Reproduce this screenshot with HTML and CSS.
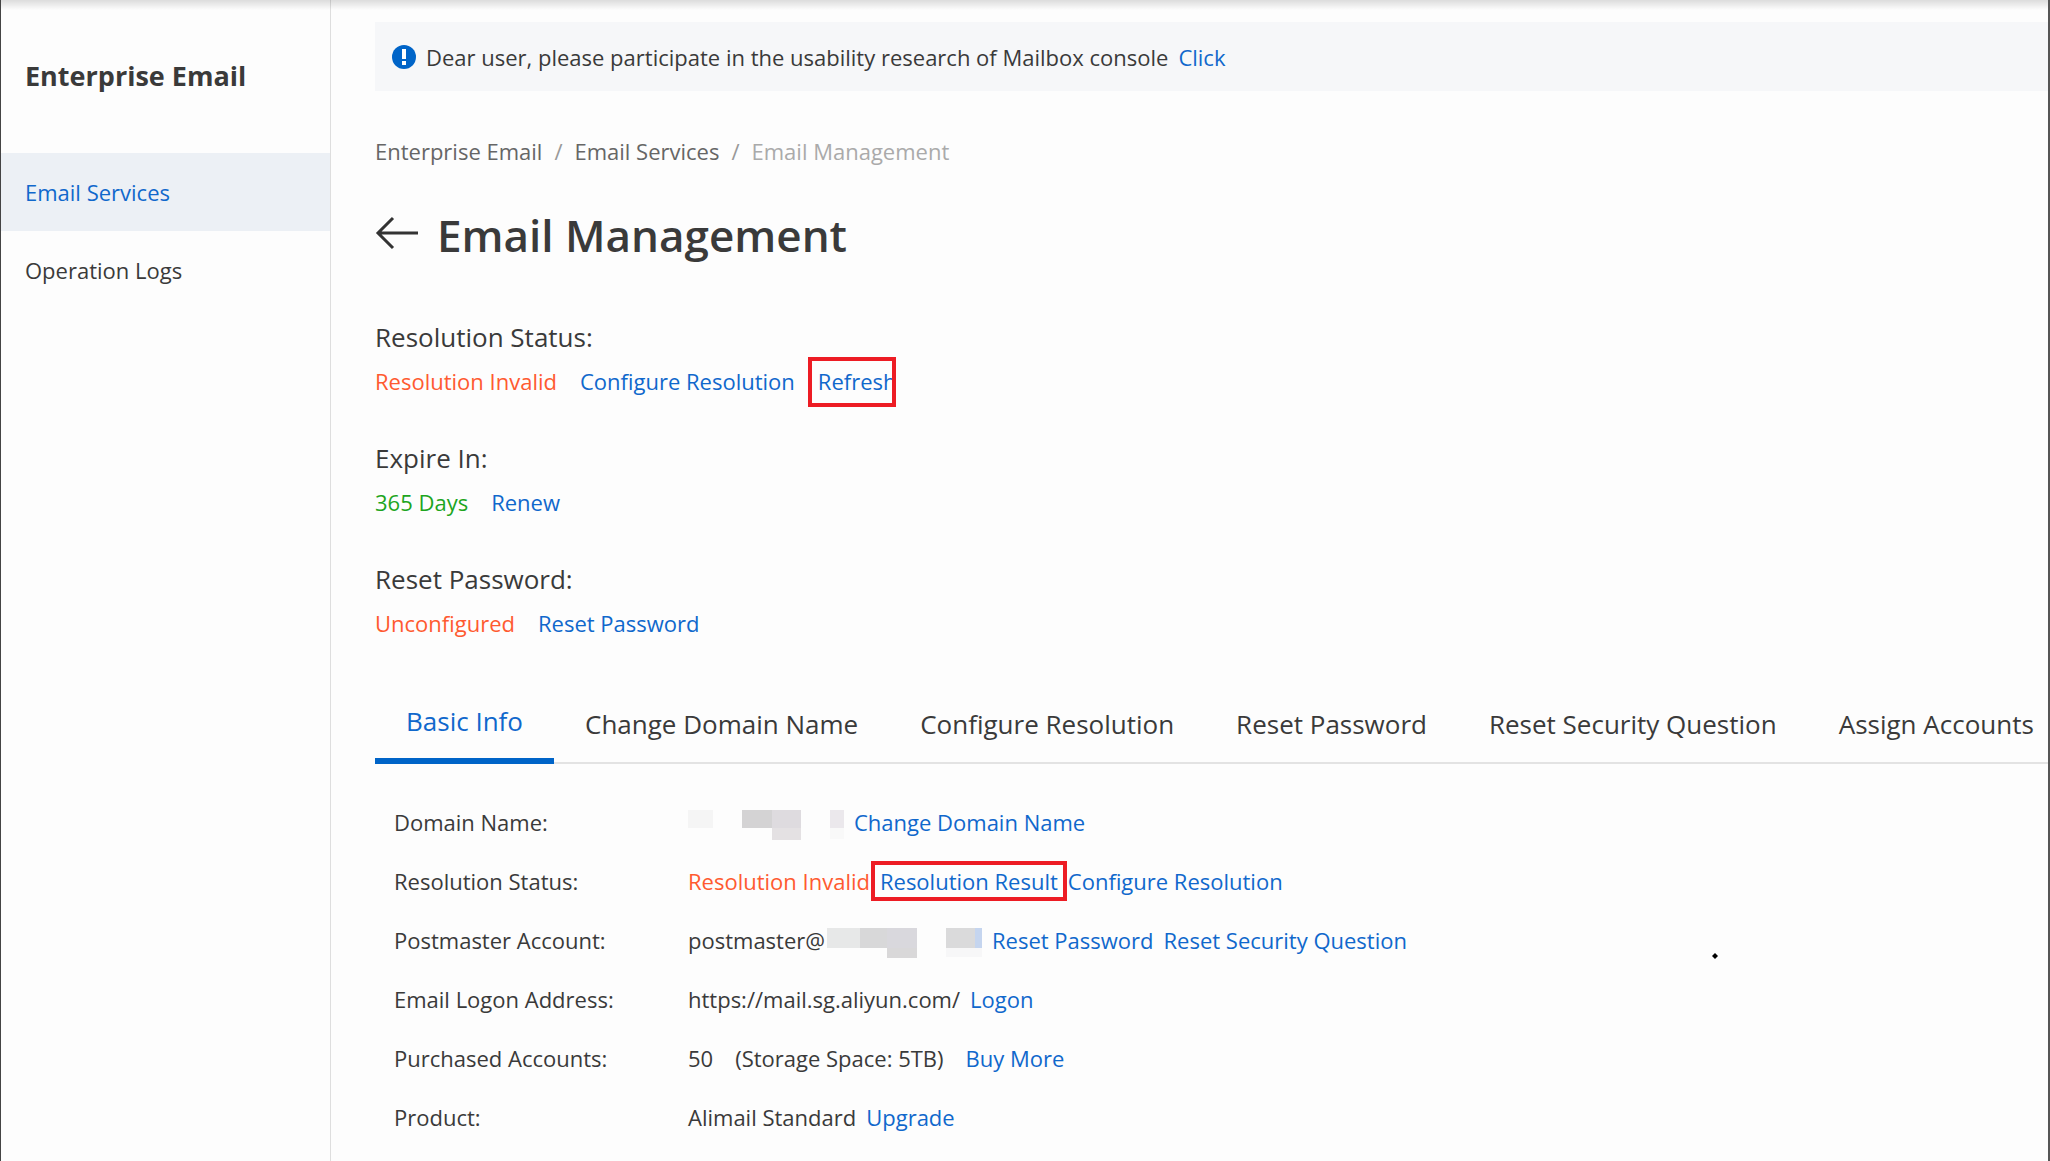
FILE: index.html
```html
<!DOCTYPE html>
<html lang="en">
<head>
<meta charset="utf-8">
<title>Email Management</title>
<link rel="stylesheet" href="styles.css">
</head>
<body>
<div class="page">
    <aside class="sidebar">
        <h2>Enterprise Email</h2>
        <nav>
            <a href="#" class="active">Email Services</a>
            <a href="#">Operation Logs</a>
        </nav>
    </aside>

    <main class="content">
        <div class="notice">
            <svg class="noticeIcon" viewBox="0 0 24 24">
                <circle cx="12" cy="12" r="12" fill="#0064c8"/>
                <path d="M10 4h4v10h-4zM10 16h4v4h-4z" fill="#fff"/>
            </svg>
            <span>Dear user, please participate in the usability research of Mailbox console</span>
            <a href="#">Click</a>
        </div>

        <div class="breadcrumb">
            <a href="#">Enterprise Email</a>
            <span>/</span>
            <a href="#">Email Services</a>
            <span>/</span>
            <span class="current">Email Management</span>
        </div>

        <div class="titleBar">
            <a href="#" class="back" aria-label="Back">
                <svg class="backIcon" viewBox="0 0 44 34">
                    <path d="M43 17H3M18 2L3 17l15 15" fill="none" stroke="#333" stroke-width="3"/>
                </svg>
            </a>
            <h1>Email Management</h1>
        </div>

        <!-- status summary -->
        <div class="summary">
            <div>
                <h3>Resolution Status:</h3>
                <p><span class="warn">Resolution Invalid</span> <a href="#">Configure Resolution</a> <a href="#" class="marked markedRefresh">Refresh</a></p>
            </div>
            <div>
                <h3>Expire In:</h3>
                <p><span class="ok">365 Days</span> <a href="#">Renew</a></p>
            </div>
            <div>
                <h3>Reset Password:</h3>
                <p><span class="warn">Unconfigured</span> <a href="#">Reset Password</a></p>
            </div>
        </div>

        <div class="tabs">
            <button type="button" class="active">Basic Info</button>
            <button type="button">Change Domain Name</button>
            <button type="button">Configure Resolution</button>
            <button type="button">Reset Password</button>
            <button type="button">Reset Security Question</button>
            <button type="button">Assign Accounts</button>
        </div>

        <table class="info">
            <tr>
                <th>Domain Name:</th>
                <td><div class="value">
                    <svg class="mask" width="156" height="30" shape-rendering="crispEdges">
                        <rect width="25" height="18" fill="#f5f5f5"/>
                        <rect x="54" width="30" height="18" fill="#d4d3d4"/>
                        <rect x="84" width="29" height="18" fill="#dedbdf"/>
                        <rect x="84" y="18" width="29" height="12" fill="#e4e1e3"/>
                        <rect x="142" width="14" height="18" fill="#ebe8ec"/>
                        <rect x="142" y="18" width="14" height="11" fill="#f9f9f9"/>
                    </svg>
                    <a href="#">Change Domain Name</a>
                </div></td>
            </tr>
            <tr>
                <th>Resolution Status:</th>
                <td><div class="value"><span class="warn">Resolution Invalid</span> <a href="#" class="marked markedResult">Resolution Result</a> <a href="#">Configure Resolution</a></div></td>
            </tr>
            <tr>
                <th>Postmaster Account:</th>
                <td><div class="value">
                    <span class="account">postmaster@
                    <svg class="mask" width="157" height="30" shape-rendering="crispEdges">
                        <rect x="2" width="33" height="20" fill="#e7e8e8"/>
                        <rect x="35" width="27" height="20" fill="#d8d8d9"/>
                        <rect x="62" width="30" height="20" fill="#d9d8dd"/>
                        <rect x="62" y="20" width="30" height="10" fill="#d9d8d9"/>
                        <rect x="121" width="29" height="20" fill="#dadadb"/>
                        <rect x="150" width="7" height="20" fill="#c5d5ef"/>
                        <rect x="121" y="20" width="36" height="9" fill="#f7f7f8"/>
                    </svg></span>
                    <a href="#">Reset Password</a>
                    <a href="#">Reset Security Question</a>
                </div></td>
            </tr>
            <tr>
                <th>Email Logon Address:</th>
                <td><div class="value"><span>https://mail.sg.aliyun.com/</span> <a href="#">Logon</a></div></td>
            </tr>
            <tr>
                <th>Purchased Accounts:</th>
                <td><div class="value wide"><span>50</span> <span>(Storage Space: 5TB)</span> <a href="#">Buy More</a></div></td>
            </tr>
            <tr>
                <th>Product:</th>
                <td><div class="value"><span>Alimail Standard</span> <a href="#">Upgrade</a></div></td>
            </tr>
        </table>
    </main>
    <svg class="pointer" viewBox="0 0 6 6"><path d="M3 0l3 3-3 3-3-3z"/></svg>
</div>
</body>
</html>
```
FILE: styles.css
```css
*{
    box-sizing: border-box;
}
body{
    margin: 0;
    background: #fdfdfd;
    color: #3a3a3a;
    font: 22px/30px "Open Sans", "Noto Sans", sans-serif;
}
a{
    color: #1068cc;
    text-decoration: none;
}
h1, h2, h3, p{
    margin: 0;
}
.page{
    position: relative;
    display: flex;
    min-height: 100vh;
    border-left: 1px solid #444;
    border-right: 2px solid #555;
    overflow: hidden;
}
/* shadow of the bar above */
.page::before{
    content: "";
    position: absolute;
    top: 0;
    left: 0;
    right: 0;
    height: 10px;
    background: linear-gradient(rgba(0, 0, 0, 0.13), rgba(0, 0, 0, 0));
}

/* sidebar */
.sidebar{
    flex: 0 0 330px;
    border-right: 1px solid #dedede;
}
.sidebar h2{
    padding: 56px 24px 57px;
    font-size: 27px;
    line-height: 40px;
    font-weight: 700;
    white-space: nowrap;
}
.sidebar nav a{
    display: block;
    padding: 24px;
    color: #3a3a3a;
}
.sidebar nav a.active{
    background: #ecf0f5;
    color: #1068cc;
}

/* main column */
.content{
    flex: 1;
    min-width: 0;
    padding: 22px 0 0 44px;
}
.notice{
    display: flex;
    align-items: center;
    gap: 10px;
    height: 69px;
    padding-left: 17px;
    background: #f6f7f9;
}
.noticeIcon{
    width: 24px;
    height: 24px;
}
.breadcrumb{
    display: flex;
    gap: 12px;
    padding-top: 45px;
    color: #999;
}
.breadcrumb a{
    color: #666;
}
.breadcrumb .current{
    color: #aaa;
}
.titleBar{
    display: flex;
    align-items: center;
    gap: 18px;
    margin-top: 39px;
}
.titleBar h1{
    font-size: 44px;
    line-height: 60px;
    font-weight: 600;
}
.back{
    padding-bottom: 5px;
}
.backIcon{
    display: block;
    width: 44px;
    height: 34px;
}
.summary{
    display: grid;
    gap: 33px;
    padding-top: 50px;
}
.summary h3{
    font-size: 26px;
    line-height: 44px;
    font-weight: 400;
}
.summary p{
    display: flex;
    gap: 23px;
    line-height: 44px;
}
.warn{
    color: #ff5a30;
}
.ok{
    color: #1ea51e;
}

/* red frames around a link */
.marked{
    position: relative;
}
.marked::after{
    content: "";
    position: absolute;
    border: 4px solid #ed1c24;
}
.markedRefresh::after{
    inset: -2px 0 -4px -10px;
}
.markedResult::after{
    inset: -5px -9px;
}

/* tabs */
.tabs{
    display: flex;
    margin-top: 45px;
    border-bottom: 2px solid #e3e3e3;
    white-space: nowrap;
}
.tabs button{
    height: 74px;
    margin-bottom: -2px;
    padding: 0 31px 6px;
    border: 0;
    background: none;
    color: #3a3a3a;
    font: inherit;
    font-size: 26px;
}
.tabs .active{
    border-bottom: 6px solid #0064c8;
    color: #1068cc;
}

/* info table */
.info{
    margin: 28px 0 0 19px;
    border-collapse: collapse;
}
.info th{
    width: 294px;
    padding: 0;
    font-weight: 400;
    text-align: left;
}
.info td{
    padding: 0;
}
.value{
    display: flex;
    align-items: center;
    gap: 10px;
    height: 59px;
}
.value.wide{
    gap: 22px;
}
.account{
    display: flex;
    align-items: center;
}
.mask{
    display: block;
    margin-top: 6px;
}
.pointer{
    position: absolute;
    left: 1711px;
    top: 953px;
    width: 6px;
    height: 6px;
}
```
